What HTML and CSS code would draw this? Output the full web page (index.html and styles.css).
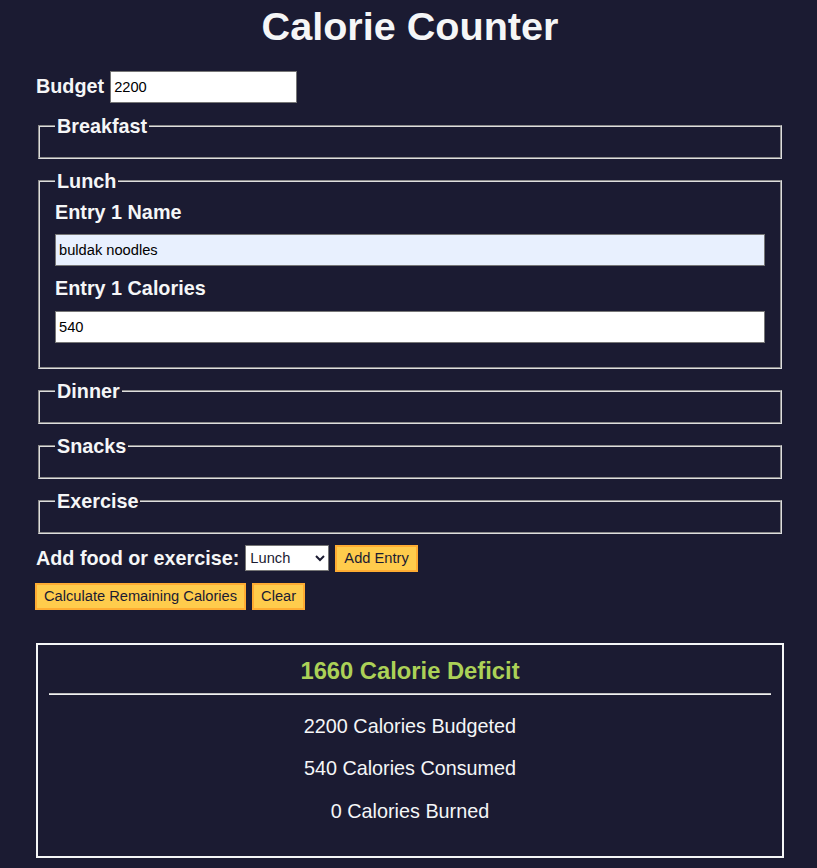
FILE: index.html
```html
<!DOCTYPE html>
<html lang="en">
<head>
<meta charset="utf-8">
<title>Calorie Counter</title>
<link rel="stylesheet" href="styles.css">
</head>
<body>
<main>
  <h1 class="title">Calorie Counter</h1>
  <div class="container">
    <form class="counter-form">
      <div class="budget-row">
        <label class="lbl" for="budget">Budget</label>
        <input class="field budget-input" type="text" id="budget" value="2200">
      </div>
      <fieldset class="meal">
        <legend class="legend">Breakfast</legend>
        <div class="input-container"></div>
      </fieldset>
      <fieldset class="meal">
        <legend class="legend">Lunch</legend>
        <div class="input-container">
          <label class="lbl entry-label first-label" for="lunch-1-name">Entry 1 Name</label>
          <input class="field entry-input autofilled" type="text" id="lunch-1-name" value="buldak noodles">
          <label class="lbl entry-label" for="lunch-1-calories">Entry 1 Calories</label>
          <input class="field entry-input" type="text" id="lunch-1-calories" value="540">
        </div>
      </fieldset>
      <fieldset class="meal">
        <legend class="legend">Dinner</legend>
        <div class="input-container"></div>
      </fieldset>
      <fieldset class="meal">
        <legend class="legend">Snacks</legend>
        <div class="input-container"></div>
      </fieldset>
      <fieldset class="meal">
        <legend class="legend">Exercise</legend>
        <div class="input-container"></div>
      </fieldset>
      <div class="controls">
        <label class="lbl" for="entry-dropdown">Add food or exercise:</label>
        <select class="dropdown" id="entry-dropdown">
          <option>Breakfast</option>
          <option selected>Lunch</option>
          <option>Dinner</option>
          <option>Snacks</option>
          <option>Exercise</option>
        </select>
        <button class="btn" type="button">Add Entry</button>
      </div>
      <div class="actions">
        <button class="btn" type="button">Calculate Remaining Calories</button>
        <button class="btn" type="button">Clear</button>
      </div>
    </form>
    <div class="output">
      <span class="deficit">1660 Calorie Deficit</span>
      <hr class="divider">
      <p class="stat">2200 Calories Budgeted</p>
      <p class="stat">540 Calories Consumed</p>
      <p class="stat">0 Calories Burned</p>
    </div>
  </div>
</main>
</body>
</html>
```
FILE: styles.css
```css
body {
  margin: 3.8px 8.8px 8.8px 11.8px;
  font-family: "Liberation Sans", Arial, Helvetica, sans-serif;
  font-size: 19.8px;
  background-color: #1b1b32;
  color: #f5f6f7;
}

.title {
  text-align: center;
  font-size: 39.6px;
  margin: 0 auto 22px;
  line-height: 45px;
}

.container {
  width: 748px;
  margin: 22px auto;
}

.counter-form {
  margin: 0;
}

.lbl,
.legend {
  font-weight: bold;
}

.budget-row {
  display: flex;
  align-items: center;
  gap: 6px;
  margin-bottom: 12px;
  padding-left: 0;
}

.field {
  box-sizing: border-box;
  height: 32px;
  font-family: "Liberation Sans", Arial, sans-serif;
  font-size: 14.67px;
  color: #000;
  background: #fff;
  border: 1px solid #767676;
  border-radius: 0;
  padding: 1px 3px;
  margin: 0;
}

.budget-input {
  width: 187px;
}

.meal {
  margin: 0 2.2px 11px;
  padding: 6.9px 14.85px 12.4px;
  border: 2px groove #dedede;
}

.legend {
  padding: 0 2px;
  line-height: 22.8px;
}

.input-container {
  display: flex;
  flex-direction: column;
}

.entry-label {
  line-height: 22.8px;
  margin-bottom: 11px;
}

.first-label {
  margin-top: 1px;
}

.entry-input {
  width: 100%;
  margin-bottom: 11px;
}

.autofilled {
  background: #e8f0fe;
}

.controls {
  display: flex;
  align-items: center;
  gap: 6px;
  margin-top: 2px;
  margin-bottom: 11px;
  padding-left: 0;
}

.dropdown {
  box-sizing: border-box;
  width: 84px;
  height: 26px;
  font-family: "Liberation Sans", Arial, sans-serif;
  font-size: 14.67px;
  color: #1b1b32;
  background: #fff;
  border: 1px solid #767676;
  border-radius: 0;
  margin: 0;
}

.btn {
  box-sizing: border-box;
  height: 27px;
  font-family: "Liberation Sans", Arial, sans-serif;
  font-size: 14.67px;
  color: #1b1b32;
  background-color: #ffcc4c;
  border: 2px solid #feac32;
  border-radius: 0;
  padding: 1px 7px;
  margin: 0;
  cursor: pointer;
}

.actions {
  display: flex;
  gap: 6px;
  margin-left: -1px;
}

.output {
  border: 2px solid #f5f6f7;
  padding: 11px;
  text-align: center;
  margin-top: 33px;
  height: 189px;
}

.deficit {
  display: inline-block;
  margin-top: 1px;
  font-weight: bold;
  font-size: 23.76px;
  color: #acd157;
}

.divider {
  margin: 8px 0 11px;
  border: 0;
  border-top: 1px solid #bdbdbd;
  border-bottom: 1px solid #f2f2f2;
}

.stat {
  margin: 19.8px 0;
  line-height: 22.8px;
}
```
